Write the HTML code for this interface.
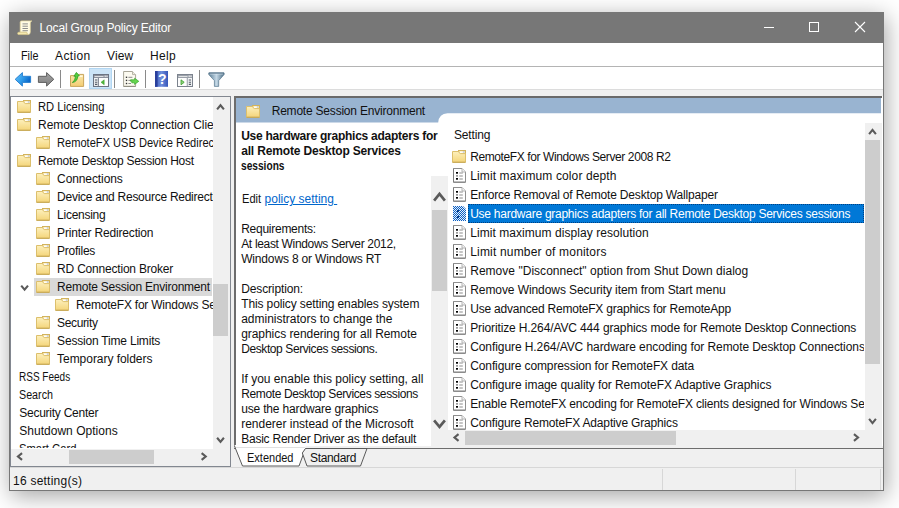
<!DOCTYPE html>
<html>
<head>
<meta charset="utf-8">
<title>Local Group Policy Editor</title>
<style>
html,body{margin:0;padding:0;}
body{width:899px;height:508px;overflow:hidden;background:#fff;position:relative;
 font-family:"Liberation Sans",sans-serif;font-size:12px;color:#111;}
.a{position:absolute;}
.t{position:absolute;white-space:nowrap;line-height:16px;height:16px;}
.b{font-weight:bold;}
#win{left:9px;top:12px;width:875px;height:479px;background:#fff;
 box-shadow:2px 5px 22px 0 rgba(0,0,0,.36);}
#title{left:9px;top:12px;width:875px;height:31px;background:#777;}
#frame{left:9px;top:43px;width:873px;height:447px;border:1px solid #777;border-top:none;}
.clip{position:absolute;overflow:hidden;}
.scr{position:absolute;background:#f0f0f0;}
.thumb{position:absolute;background:#cdcdcd;}
</style>
</head>
<body>
<div class="a" id="win"></div>
<div class="a" id="title"></div>

<svg class="a" style="left:17.4px;top:19.5px" width="16" height="16" viewBox="0 0 16 16"><path d="M3.2 2.2 Q3.2 0.9 4.6 0.9 H14.9 Q13.4 1.4 13.3 3 V12 Q13.3 14.6 11 14.6 L9 12.2 H3.2 Z" fill="#fffbe3" stroke="#e2d49a" stroke-width=".7"/><path d="M0.6 13.4 Q0.6 12.2 2 12.2 H10 Q9.4 14.6 11 14.6 H2 Q0.6 14.6 0.6 13.4Z" fill="#f6e9ae" stroke="#dccb88" stroke-width=".6"/><path d="M5.5 3.9 H10.9 M5.5 6.2 H10.9 M5.5 8.5 H10.9 M5.5 10.7 H10.9" stroke="#8c8c8c" stroke-width="1"/></svg>
<div class="t" style="left:39.5px;top:20px;letter-spacing:-0.15px;color:#fff;">Local Group Policy Editor</div>
<div class="a" style="left:764px;top:27px;width:10px;height:1px;background:#fff;"></div>
<div class="a" style="left:809px;top:22px;width:8px;height:8px;border:1px solid #fff;"></div>
<svg class="a" style="left:854px;top:21px" width="12" height="12" viewBox="0 0 12 12"><path d="M1 1 L11 11 M11 1 L1 11" stroke="#fff" stroke-width="1.1" fill="none"/></svg>
<div class="t" style="left:20.5px;top:48px;transform:scaleX(0.8995);transform-origin:0 0;">File</div>
<div class="t" style="left:55px;top:48px;letter-spacing:0.388px;">Action</div>
<div class="t" style="left:107px;top:48px;letter-spacing:0.134px;">View</div>
<div class="t" style="left:150px;top:48px;letter-spacing:0.337px;">Help</div>
<div class="a" style="left:10px;top:66px;width:873px;height:1px;background:#b4b4b4;"></div>
<div class="a" style="left:10px;top:89px;width:873px;height:7px;background:#f0f0f0;border-top:1px solid #dcdcdc;box-sizing:border-box;"></div>
<div class="a" style="left:89px;top:68px;width:23px;height:21px;background:#cce4f7;border:1px solid #b2d6f2;box-sizing:border-box;"></div>
<div class="a" style="left:60px;top:70px;width:1px;height:18px;background:#8a8a8a;"></div>
<div class="a" style="left:114px;top:70px;width:1px;height:18px;background:#8a8a8a;"></div>
<div class="a" style="left:145px;top:70px;width:1px;height:18px;background:#8a8a8a;"></div>
<div class="a" style="left:199px;top:70px;width:1px;height:18px;background:#8a8a8a;"></div>
<svg class="a" style="left:14px;top:71px" width="18" height="17" viewBox="0 0 18 17"><defs><linearGradient id="ba" x1="0" y1="0" x2="1" y2="0.5"><stop offset="0" stop-color="#6cc6fa"/><stop offset="0.55" stop-color="#2f9bea"/><stop offset="1" stop-color="#0a66c8"/></linearGradient></defs><path d="M1.2 8.3 L8.4 1.6 V5.3 H16.6 V11.4 H8.4 V15.1 Z" fill="url(#ba)" stroke="#2b82d2" stroke-width="1" stroke-linejoin="round"/></svg>
<svg class="a" style="left:37px;top:71px" width="18" height="17" viewBox="0 0 18 17"><defs><linearGradient id="fa" x1="0" y1="0" x2="0" y2="1"><stop offset="0" stop-color="#a2a2a2"/><stop offset="1" stop-color="#808080"/></linearGradient></defs><path d="M16.8 8.3 L9.6 1.6 V5.3 H1.4 V11.4 H9.6 V15.1 Z" fill="url(#fa)" stroke="#5e5e5e" stroke-width="1" stroke-linejoin="round"/></svg>
<svg class="a" style="left:69px;top:71px" width="16" height="17" viewBox="0 0 16 17"><defs><linearGradient id="uf" x1="0" y1="0" x2="0" y2="1"><stop offset="0" stop-color="#fbe8ad"/><stop offset="1" stop-color="#f3cc72"/></linearGradient></defs><path d="M1.5 4.6 H8.5 L9.5 3.4 H14.6 V15.4 H1.5 Z" fill="url(#uf)" stroke="#c9a55c"/><path d="M9.8 4.4 H13.6 V6 H9" fill="#fff8e0"/><path d="M3.4 11.6 Q6.2 9.6 6.6 5.2 L4.9 5.3 L7.4 1.4 L10.4 4.9 L8.8 5 Q8.6 10.6 3.4 11.6Z" fill="#52cf3c" stroke="#2f9c26" stroke-width="0.8" stroke-linejoin="round"/></svg>
<svg class="a" style="left:93px;top:74px" width="16" height="13" viewBox="0 0 16 13"><rect x="0.5" y="0.5" width="15" height="12" fill="#fdfdfd" stroke="#6c7382"/><rect x="1" y="1" width="14" height="3" fill="#8b909c"/><path d="M1.5 2.5 H10.5" stroke="#f4f4f4" stroke-width="0.8"/><rect x="11.6" y="1.6" width="1.2" height="1.2" fill="#fff"/><rect x="13.4" y="1.6" width="1.2" height="1.2" fill="#fff"/><rect x="1" y="4.5" width="4" height="7.5" fill="#e9ebee"/><path d="M5.4 4 V12.5" stroke="#6c7382" stroke-width="0.9"/><path d="M2 6 H4.3 M2 8.2 H4.3 M2 10.4 H4.3" stroke="#555c68" stroke-width="1.1"/><path d="M11.2 5.8 V10.8 L8 8.3 Z" fill="#4db83a" stroke="#3a9a2c" stroke-width="0.5"/></svg>
<svg class="a" style="left:123px;top:71px" width="17" height="16" viewBox="0 0 17 16"><path d="M0.6 0.5 H9.5 L12.6 3.6 V15.4 H0.6 Z" fill="#fdfbf1" stroke="#a9a698"/><path d="M9.5 0.5 V3.6 H12.6" fill="#efeee2" stroke="#b8b6a8"/><path d="M0.6 15.4 H12.6" stroke="#8f8c80"/><rect x="2.8" y="5.6" width="1.4" height="1.4" fill="#333"/><rect x="2.8" y="8.7" width="1.4" height="1.4" fill="#333"/><rect x="2.8" y="11.8" width="1.4" height="1.4" fill="#333"/><path d="M5.4 6.3 H9.4 M5.4 9.4 H8 M5.4 12.5 H8" stroke="#8c8c8c" stroke-width="1"/><path d="M7.6 8.8 H11.6 V7.2 L15.8 10.3 L11.6 13.4 V11.8 H8.8 V10.3 H7.6 Z" fill="#66d64e" stroke="#38a62c" stroke-width="0.7" stroke-linejoin="round"/></svg>
<svg class="a" style="left:155px;top:71px" width="13" height="16" viewBox="0 0 13 16"><defs><linearGradient id="hg" x1="0" y1="0" x2="1" y2="0"><stop offset="0" stop-color="#3f5cbc"/><stop offset="0.5" stop-color="#6f8edc"/><stop offset="1" stop-color="#3555b8"/></linearGradient></defs><rect x="0" y="0" width="13" height="15.8" fill="url(#hg)"/><rect x="0" y="0" width="2.6" height="15.8" fill="#2a3f9c"/><text x="7.4" y="12.8" font-family="Liberation Sans, sans-serif" font-size="14" font-weight="bold" fill="#fff" text-anchor="middle">?</text></svg>
<svg class="a" style="left:177px;top:74px" width="16" height="13" viewBox="0 0 16 13"><rect x="0.5" y="0.5" width="15" height="12" fill="#fdfdfd" stroke="#7c838e"/><rect x="1" y="1" width="14" height="3" fill="#9aa0a9"/><path d="M1.5 2.5 H10.5" stroke="#f4f4f4" stroke-width="0.8"/><rect x="11.6" y="1.6" width="1.2" height="1.2" fill="#fff"/><rect x="13.4" y="1.6" width="1.2" height="1.2" fill="#fff"/><path d="M10.3 4 V12.5" stroke="#7c838e" stroke-width="0.9"/><rect x="10.8" y="4.5" width="4.2" height="7.5" fill="#eef0f2"/><path d="M11.8 6 H14 M11.8 8.2 H14 M11.8 10.4 H14" stroke="#555c68" stroke-width="1.1"/><path d="M4 5.8 V10.8 L7.2 8.3 Z" fill="#8fd67c" stroke="#3a9a2c" stroke-width="0.8"/></svg>
<svg class="a" style="left:208px;top:72px" width="17" height="15" viewBox="0 0 17 15"><defs><linearGradient id="fl" x1="0" y1="0" x2="1" y2="0"><stop offset="0" stop-color="#5c7e96"/><stop offset="0.5" stop-color="#c4d8e6"/><stop offset="1" stop-color="#4a6c84"/></linearGradient></defs><path d="M0.8 1 H16.1 V2.6 L10.7 8.6 V14.4 H6.4 V8.6 L0.8 2.6 Z" fill="url(#fl)" stroke="#55758d" stroke-width="0.7"/><path d="M1.6 1.9 H15.3" stroke="#dfeaf2" stroke-width="0.9"/><path d="M0.8 1 H16.1" stroke="#4b6a82" stroke-width="1"/></svg>
<div class="a" style="left:10px;top:96px;width:873px;height:371px;background:#f0f0f0;"></div>
<div class="a" style="left:10px;top:467px;width:873px;height:23px;background:#f0f0f0;border-top:1px solid #d7d7d7;"></div>
<div class="a" style="left:10px;top:96px;width:221px;height:371px;background:#fff;border:1px solid #828790;box-sizing:border-box;"></div>
<div class="clip" style="left:11px;top:97px;width:202px;height:351px;">
<svg class="a" style="left:6px;top:3px" width="14" height="13" viewBox="0 0 14 13"><defs><linearGradient id="fg1" x1="0" y1="0" x2="0" y2="1"><stop offset="0" stop-color="#fdf0bd"/><stop offset="1" stop-color="#f4d57a"/></linearGradient></defs><rect x="6.5" y="0.5" width="7" height="4" fill="#f3d98c" stroke="#d2b35c"/><rect x="7.6" y="1.3" width="4.9" height="2" fill="#fffdf4"/><rect x="10.8" y="1.3" width="1.7" height="1.4" fill="#b9c4cf"/><path d="M0.5 1.5 H6 Q7 1.5 7.3 2.6 Q7.6 3.6 8.6 3.6 H13.5 V12.2 H0.5 Z" fill="url(#fg1)" stroke="#dcbf6c" stroke-width="1"/><path d="M0.5 12.3 H13.5" stroke="#c5a550" stroke-width="1"/></svg>
<div class="t tr" style="left:27.1px;top:2px;transform:scaleX(0.9317);transform-origin:0 0;">RD Licensing</div>
<svg class="a" style="left:6px;top:21px" width="14" height="13" viewBox="0 0 14 13"><defs><linearGradient id="fg2" x1="0" y1="0" x2="0" y2="1"><stop offset="0" stop-color="#fdf0bd"/><stop offset="1" stop-color="#f4d57a"/></linearGradient></defs><rect x="6.5" y="0.5" width="7" height="4" fill="#f3d98c" stroke="#d2b35c"/><rect x="7.6" y="1.3" width="4.9" height="2" fill="#fffdf4"/><rect x="10.8" y="1.3" width="1.7" height="1.4" fill="#b9c4cf"/><path d="M0.5 1.5 H6 Q7 1.5 7.3 2.6 Q7.6 3.6 8.6 3.6 H13.5 V12.2 H0.5 Z" fill="url(#fg2)" stroke="#dcbf6c" stroke-width="1"/><path d="M0.5 12.3 H13.5" stroke="#c5a550" stroke-width="1"/></svg>
<div class="t tr" style="left:27.1px;top:20px;letter-spacing:-0.061px;">Remote Desktop Connection Client</div>
<svg class="a" style="left:25px;top:39px" width="14" height="13" viewBox="0 0 14 13"><defs><linearGradient id="fg3" x1="0" y1="0" x2="0" y2="1"><stop offset="0" stop-color="#fdf0bd"/><stop offset="1" stop-color="#f4d57a"/></linearGradient></defs><rect x="6.5" y="0.5" width="7" height="4" fill="#f3d98c" stroke="#d2b35c"/><rect x="7.6" y="1.3" width="4.9" height="2" fill="#fffdf4"/><rect x="10.8" y="1.3" width="1.7" height="1.4" fill="#b9c4cf"/><path d="M0.5 1.5 H6 Q7 1.5 7.3 2.6 Q7.6 3.6 8.6 3.6 H13.5 V12.2 H0.5 Z" fill="url(#fg3)" stroke="#dcbf6c" stroke-width="1"/><path d="M0.5 12.3 H13.5" stroke="#c5a550" stroke-width="1"/></svg>
<div class="t tr" style="left:46.1px;top:38px;transform:scaleX(0.9238);transform-origin:0 0;">RemoteFX USB Device Redirection</div>
<svg class="a" style="left:6px;top:57px" width="14" height="13" viewBox="0 0 14 13"><defs><linearGradient id="fg4" x1="0" y1="0" x2="0" y2="1"><stop offset="0" stop-color="#fdf0bd"/><stop offset="1" stop-color="#f4d57a"/></linearGradient></defs><rect x="6.5" y="0.5" width="7" height="4" fill="#f3d98c" stroke="#d2b35c"/><rect x="7.6" y="1.3" width="4.9" height="2" fill="#fffdf4"/><rect x="10.8" y="1.3" width="1.7" height="1.4" fill="#b9c4cf"/><path d="M0.5 1.5 H6 Q7 1.5 7.3 2.6 Q7.6 3.6 8.6 3.6 H13.5 V12.2 H0.5 Z" fill="url(#fg4)" stroke="#dcbf6c" stroke-width="1"/><path d="M0.5 12.3 H13.5" stroke="#c5a550" stroke-width="1"/></svg>
<div class="t tr" style="left:27.1px;top:56px;letter-spacing:-0.289px;">Remote Desktop Session Host</div>
<svg class="a" style="left:25px;top:75px" width="14" height="13" viewBox="0 0 14 13"><defs><linearGradient id="fg5" x1="0" y1="0" x2="0" y2="1"><stop offset="0" stop-color="#fdf0bd"/><stop offset="1" stop-color="#f4d57a"/></linearGradient></defs><rect x="6.5" y="0.5" width="7" height="4" fill="#f3d98c" stroke="#d2b35c"/><rect x="7.6" y="1.3" width="4.9" height="2" fill="#fffdf4"/><rect x="10.8" y="1.3" width="1.7" height="1.4" fill="#b9c4cf"/><path d="M0.5 1.5 H6 Q7 1.5 7.3 2.6 Q7.6 3.6 8.6 3.6 H13.5 V12.2 H0.5 Z" fill="url(#fg5)" stroke="#dcbf6c" stroke-width="1"/><path d="M0.5 12.3 H13.5" stroke="#c5a550" stroke-width="1"/></svg>
<div class="t tr" style="left:46.1px;top:74px;letter-spacing:-0.102px;">Connections</div>
<svg class="a" style="left:25px;top:93px" width="14" height="13" viewBox="0 0 14 13"><defs><linearGradient id="fg6" x1="0" y1="0" x2="0" y2="1"><stop offset="0" stop-color="#fdf0bd"/><stop offset="1" stop-color="#f4d57a"/></linearGradient></defs><rect x="6.5" y="0.5" width="7" height="4" fill="#f3d98c" stroke="#d2b35c"/><rect x="7.6" y="1.3" width="4.9" height="2" fill="#fffdf4"/><rect x="10.8" y="1.3" width="1.7" height="1.4" fill="#b9c4cf"/><path d="M0.5 1.5 H6 Q7 1.5 7.3 2.6 Q7.6 3.6 8.6 3.6 H13.5 V12.2 H0.5 Z" fill="url(#fg6)" stroke="#dcbf6c" stroke-width="1"/><path d="M0.5 12.3 H13.5" stroke="#c5a550" stroke-width="1"/></svg>
<div class="t tr" style="left:46.1px;top:92px;letter-spacing:-0.263px;">Device and Resource Redirection</div>
<svg class="a" style="left:25px;top:111px" width="14" height="13" viewBox="0 0 14 13"><defs><linearGradient id="fg7" x1="0" y1="0" x2="0" y2="1"><stop offset="0" stop-color="#fdf0bd"/><stop offset="1" stop-color="#f4d57a"/></linearGradient></defs><rect x="6.5" y="0.5" width="7" height="4" fill="#f3d98c" stroke="#d2b35c"/><rect x="7.6" y="1.3" width="4.9" height="2" fill="#fffdf4"/><rect x="10.8" y="1.3" width="1.7" height="1.4" fill="#b9c4cf"/><path d="M0.5 1.5 H6 Q7 1.5 7.3 2.6 Q7.6 3.6 8.6 3.6 H13.5 V12.2 H0.5 Z" fill="url(#fg7)" stroke="#dcbf6c" stroke-width="1"/><path d="M0.5 12.3 H13.5" stroke="#c5a550" stroke-width="1"/></svg>
<div class="t tr" style="left:46.1px;top:110px;letter-spacing:-0.263px;">Licensing</div>
<svg class="a" style="left:25px;top:129px" width="14" height="13" viewBox="0 0 14 13"><defs><linearGradient id="fg8" x1="0" y1="0" x2="0" y2="1"><stop offset="0" stop-color="#fdf0bd"/><stop offset="1" stop-color="#f4d57a"/></linearGradient></defs><rect x="6.5" y="0.5" width="7" height="4" fill="#f3d98c" stroke="#d2b35c"/><rect x="7.6" y="1.3" width="4.9" height="2" fill="#fffdf4"/><rect x="10.8" y="1.3" width="1.7" height="1.4" fill="#b9c4cf"/><path d="M0.5 1.5 H6 Q7 1.5 7.3 2.6 Q7.6 3.6 8.6 3.6 H13.5 V12.2 H0.5 Z" fill="url(#fg8)" stroke="#dcbf6c" stroke-width="1"/><path d="M0.5 12.3 H13.5" stroke="#c5a550" stroke-width="1"/></svg>
<div class="t tr" style="left:46.1px;top:128px;letter-spacing:-0.165px;">Printer Redirection</div>
<svg class="a" style="left:25px;top:147px" width="14" height="13" viewBox="0 0 14 13"><defs><linearGradient id="fg9" x1="0" y1="0" x2="0" y2="1"><stop offset="0" stop-color="#fdf0bd"/><stop offset="1" stop-color="#f4d57a"/></linearGradient></defs><rect x="6.5" y="0.5" width="7" height="4" fill="#f3d98c" stroke="#d2b35c"/><rect x="7.6" y="1.3" width="4.9" height="2" fill="#fffdf4"/><rect x="10.8" y="1.3" width="1.7" height="1.4" fill="#b9c4cf"/><path d="M0.5 1.5 H6 Q7 1.5 7.3 2.6 Q7.6 3.6 8.6 3.6 H13.5 V12.2 H0.5 Z" fill="url(#fg9)" stroke="#dcbf6c" stroke-width="1"/><path d="M0.5 12.3 H13.5" stroke="#c5a550" stroke-width="1"/></svg>
<div class="t tr" style="left:46.1px;top:146px;letter-spacing:-0.259px;">Profiles</div>
<svg class="a" style="left:25px;top:165px" width="14" height="13" viewBox="0 0 14 13"><defs><linearGradient id="fg10" x1="0" y1="0" x2="0" y2="1"><stop offset="0" stop-color="#fdf0bd"/><stop offset="1" stop-color="#f4d57a"/></linearGradient></defs><rect x="6.5" y="0.5" width="7" height="4" fill="#f3d98c" stroke="#d2b35c"/><rect x="7.6" y="1.3" width="4.9" height="2" fill="#fffdf4"/><rect x="10.8" y="1.3" width="1.7" height="1.4" fill="#b9c4cf"/><path d="M0.5 1.5 H6 Q7 1.5 7.3 2.6 Q7.6 3.6 8.6 3.6 H13.5 V12.2 H0.5 Z" fill="url(#fg10)" stroke="#dcbf6c" stroke-width="1"/><path d="M0.5 12.3 H13.5" stroke="#c5a550" stroke-width="1"/></svg>
<div class="t tr" style="left:46.1px;top:164px;letter-spacing:-0.203px;">RD Connection Broker</div>
<div class="a" style="left:23px;top:181px;width:178px;height:17.5px;background:#d9d9d9;"></div>
<svg class="a" style="left:25px;top:183px" width="14" height="13" viewBox="0 0 14 13"><defs><linearGradient id="fg11" x1="0" y1="0" x2="0" y2="1"><stop offset="0" stop-color="#fdf0bd"/><stop offset="1" stop-color="#f4d57a"/></linearGradient></defs><rect x="6.5" y="0.5" width="7" height="4" fill="#f3d98c" stroke="#d2b35c"/><rect x="7.6" y="1.3" width="4.9" height="2" fill="#fffdf4"/><rect x="10.8" y="1.3" width="1.7" height="1.4" fill="#b9c4cf"/><path d="M0.5 1.5 H6 Q7 1.5 7.3 2.6 Q7.6 3.6 8.6 3.6 H13.5 V12.2 H0.5 Z" fill="url(#fg11)" stroke="#dcbf6c" stroke-width="1"/><path d="M0.5 12.3 H13.5" stroke="#c5a550" stroke-width="1"/></svg>
<div class="t tr" style="left:46.1px;top:182px;letter-spacing:-0.23px;">Remote Session Environment</div>
<svg class="a" style="left:44px;top:201px" width="14" height="13" viewBox="0 0 14 13"><defs><linearGradient id="fg12" x1="0" y1="0" x2="0" y2="1"><stop offset="0" stop-color="#fdf0bd"/><stop offset="1" stop-color="#f4d57a"/></linearGradient></defs><rect x="6.5" y="0.5" width="7" height="4" fill="#f3d98c" stroke="#d2b35c"/><rect x="7.6" y="1.3" width="4.9" height="2" fill="#fffdf4"/><rect x="10.8" y="1.3" width="1.7" height="1.4" fill="#b9c4cf"/><path d="M0.5 1.5 H6 Q7 1.5 7.3 2.6 Q7.6 3.6 8.6 3.6 H13.5 V12.2 H0.5 Z" fill="url(#fg12)" stroke="#dcbf6c" stroke-width="1"/><path d="M0.5 12.3 H13.5" stroke="#c5a550" stroke-width="1"/></svg>
<div class="t tr" style="left:65.1px;top:200px;letter-spacing:-0.223px;">RemoteFX for Windows Server 2008 R2</div>
<svg class="a" style="left:25px;top:219px" width="14" height="13" viewBox="0 0 14 13"><defs><linearGradient id="fg13" x1="0" y1="0" x2="0" y2="1"><stop offset="0" stop-color="#fdf0bd"/><stop offset="1" stop-color="#f4d57a"/></linearGradient></defs><rect x="6.5" y="0.5" width="7" height="4" fill="#f3d98c" stroke="#d2b35c"/><rect x="7.6" y="1.3" width="4.9" height="2" fill="#fffdf4"/><rect x="10.8" y="1.3" width="1.7" height="1.4" fill="#b9c4cf"/><path d="M0.5 1.5 H6 Q7 1.5 7.3 2.6 Q7.6 3.6 8.6 3.6 H13.5 V12.2 H0.5 Z" fill="url(#fg13)" stroke="#dcbf6c" stroke-width="1"/><path d="M0.5 12.3 H13.5" stroke="#c5a550" stroke-width="1"/></svg>
<div class="t tr" style="left:46.1px;top:218px;letter-spacing:-0.366px;">Security</div>
<svg class="a" style="left:25px;top:237px" width="14" height="13" viewBox="0 0 14 13"><defs><linearGradient id="fg14" x1="0" y1="0" x2="0" y2="1"><stop offset="0" stop-color="#fdf0bd"/><stop offset="1" stop-color="#f4d57a"/></linearGradient></defs><rect x="6.5" y="0.5" width="7" height="4" fill="#f3d98c" stroke="#d2b35c"/><rect x="7.6" y="1.3" width="4.9" height="2" fill="#fffdf4"/><rect x="10.8" y="1.3" width="1.7" height="1.4" fill="#b9c4cf"/><path d="M0.5 1.5 H6 Q7 1.5 7.3 2.6 Q7.6 3.6 8.6 3.6 H13.5 V12.2 H0.5 Z" fill="url(#fg14)" stroke="#dcbf6c" stroke-width="1"/><path d="M0.5 12.3 H13.5" stroke="#c5a550" stroke-width="1"/></svg>
<div class="t tr" style="left:46.1px;top:236px;letter-spacing:-0.195px;">Session Time Limits</div>
<svg class="a" style="left:25px;top:255px" width="14" height="13" viewBox="0 0 14 13"><defs><linearGradient id="fg15" x1="0" y1="0" x2="0" y2="1"><stop offset="0" stop-color="#fdf0bd"/><stop offset="1" stop-color="#f4d57a"/></linearGradient></defs><rect x="6.5" y="0.5" width="7" height="4" fill="#f3d98c" stroke="#d2b35c"/><rect x="7.6" y="1.3" width="4.9" height="2" fill="#fffdf4"/><rect x="10.8" y="1.3" width="1.7" height="1.4" fill="#b9c4cf"/><path d="M0.5 1.5 H6 Q7 1.5 7.3 2.6 Q7.6 3.6 8.6 3.6 H13.5 V12.2 H0.5 Z" fill="url(#fg15)" stroke="#dcbf6c" stroke-width="1"/><path d="M0.5 12.3 H13.5" stroke="#c5a550" stroke-width="1"/></svg>
<div class="t tr" style="left:46.1px;top:254px;letter-spacing:-0.047px;">Temporary folders</div>
<div class="t tr" style="left:8.2px;top:272px;transform:scaleX(0.8344);transform-origin:0 0;">RSS Feeds</div>
<div class="t tr" style="left:8.2px;top:290px;transform:scaleX(0.894);transform-origin:0 0;">Search</div>
<div class="t tr" style="left:8.2px;top:308px;letter-spacing:-0.243px;">Security Center</div>
<div class="t tr" style="left:8.2px;top:326px;letter-spacing:0.029px;">Shutdown Options</div>
<div class="t tr" style="left:8.2px;top:344px;transform:scaleX(0.9371);transform-origin:0 0;">Smart Card</div>
</div>
<div class="scr" style="left:213px;top:97px;width:17px;height:352px;"></div>
<div class="thumb" style="left:213px;top:284px;width:15px;height:52px;"></div>
<svg class="a" style="left:0;top:0" width="899" height="508"><path d="M217.1 109.35 L220.5 105.25 L223.9 109.35" fill="none" stroke="#5a5a5a" stroke-width="2.1"/></svg>
<svg class="a" style="left:0;top:0" width="899" height="508"><path d="M217.1 437.75 L220.5 441.85 L223.9 437.75" fill="none" stroke="#5a5a5a" stroke-width="2.1"/></svg>
<svg class="a" style="left:0;top:0" width="899" height="508"><path d="M21.200000000000003 285.55 L24.6 289.65000000000003 L28.0 285.55" fill="none" stroke="#5a5a5a" stroke-width="2.1"/></svg>
<div class="scr" style="left:11px;top:448.5px;width:219px;height:17.5px;"></div>
<div class="thumb" style="left:69px;top:450px;width:85px;height:14px;"></div>
<svg class="a" style="left:0;top:0" width="899" height="508"><path d="M22.05 453.1 L17.95 456.5 L22.05 459.9" fill="none" stroke="#5a5a5a" stroke-width="2.1"/></svg>
<svg class="a" style="left:0;top:0" width="899" height="508"><path d="M201.64999999999998 453.1 L205.75 456.5 L201.64999999999998 459.9" fill="none" stroke="#5a5a5a" stroke-width="2.1"/></svg>
<div class="a" style="left:234px;top:96px;width:649px;height:350px;background:#fff;"></div>
<div class="a" style="left:234px;top:96px;width:648px;height:1.7px;background:#6a6a6a;"></div>
<div class="a" style="left:234px;top:96px;width:2px;height:350px;background:#6d6d6d;"></div>
<div class="a" style="left:234px;top:448px;width:649px;height:1px;background:#6d6d6d;"></div>
<svg class="a" style="left:236px;top:98px" width="645" height="26" viewBox="0 0 645 26"><path d="M0 0 H645 V15.3 H211.5 Q203 15.6 202.2 24.5 H0 Z" fill="#99b4d1"/></svg>
<svg class="a" style="left:246px;top:105px" width="14" height="13" viewBox="0 0 14 13"><defs><linearGradient id="fg16" x1="0" y1="0" x2="0" y2="1"><stop offset="0" stop-color="#fdf0bd"/><stop offset="1" stop-color="#f4d57a"/></linearGradient></defs><rect x="6.5" y="0.5" width="7" height="4" fill="#f3d98c" stroke="#d2b35c"/><rect x="7.6" y="1.3" width="4.9" height="2" fill="#fffdf4"/><rect x="10.8" y="1.3" width="1.7" height="1.4" fill="#b9c4cf"/><path d="M0.5 1.5 H6 Q7 1.5 7.3 2.6 Q7.6 3.6 8.6 3.6 H13.5 V12.2 H0.5 Z" fill="url(#fg16)" stroke="#dcbf6c" stroke-width="1"/><path d="M0.5 12.3 H13.5" stroke="#c5a550" stroke-width="1"/></svg>
<div class="t hd" style="left:271.7px;top:103px;letter-spacing:-0.209px;">Remote Session Environment</div>
<div class="clip" style="left:236px;top:123px;width:212px;height:323px;">
<div class="t b" style="left:5.199999999999989px;top:5px;letter-spacing:-0.25px;">Use hardware graphics adapters for</div>
<div class="t b" style="left:5.199999999999989px;top:20px;letter-spacing:-0.165px;">all Remote Desktop Services</div>
<div class="t b" style="left:5.199999999999989px;top:35px;transform:scaleX(0.8467);transform-origin:0 0;">sessions</div>
<div class="t" style="left:5.5px;top:68px;transform:scaleX(0.9233);transform-origin:0 0;">Edit</div>
<div class="t" style="left:28.600000000000023px;top:68px;color:#0066cc;text-decoration:underline;letter-spacing:-0.006px">policy setting&nbsp;</div>
<div class="t" style="left:5.199999999999989px;top:98px;letter-spacing:-0.262px;">Requirements:</div>
<div class="t" style="left:5.199999999999989px;top:113px;letter-spacing:-0.328px;">At least Windows Server 2012,</div>
<div class="t" style="left:5.199999999999989px;top:128px;letter-spacing:-0.165px;">Windows 8 or Windows RT</div>
<div class="t" style="left:5.199999999999989px;top:158px;letter-spacing:-0.133px;">Description:</div>
<div class="t" style="left:5.199999999999989px;top:173px;letter-spacing:-0.118px;">This policy setting enables system</div>
<div class="t" style="left:5.199999999999989px;top:188px;letter-spacing:-0.008px;">administrators to change the</div>
<div class="t" style="left:5.199999999999989px;top:203px;letter-spacing:-0.054px;">graphics rendering for all Remote</div>
<div class="t" style="left:5.199999999999989px;top:218px;letter-spacing:-0.405px;">Desktop Services sessions.</div>
<div class="t" style="left:5.199999999999989px;top:248px;">If you enable this policy setting, all</div>
<div class="t" style="left:5.199999999999989px;top:263px;letter-spacing:-0.376px;">Remote Desktop Services sessions</div>
<div class="t" style="left:5.199999999999989px;top:278px;letter-spacing:-0.168px;">use the hardware graphics</div>
<div class="t" style="left:5.199999999999989px;top:293px;letter-spacing:-0.011px;">renderer instead of the Microsoft</div>
<div class="t" style="left:5.199999999999989px;top:308px;letter-spacing:-0.229px;">Basic Render Driver as the default</div>
</div>
<div class="scr" style="left:431px;top:176px;width:17px;height:270px;"></div>
<div class="thumb" style="left:432px;top:210px;width:15px;height:81px;"></div>
<svg class="a" style="left:0;top:0" width="899" height="508"><path d="M434.1 200.60000000000002 L439.5 194.0 L444.9 200.60000000000002" fill="none" stroke="#5a5a5a" stroke-width="2.7"/></svg>
<svg class="a" style="left:0;top:0" width="899" height="508"><path d="M434.1 420.3 L439.5 426.90000000000003 L444.9 420.3" fill="none" stroke="#5a5a5a" stroke-width="2.7"/></svg>
<div class="t" style="left:454px;top:127px;letter-spacing:-0.16px;">Setting</div>
<div class="clip" style="left:449px;top:147px;width:414.6px;height:283px;">
<svg class="a" style="left:3px;top:3px" width="14" height="13" viewBox="0 0 14 13"><defs><linearGradient id="fg17" x1="0" y1="0" x2="0" y2="1"><stop offset="0" stop-color="#fdf0bd"/><stop offset="1" stop-color="#f4d57a"/></linearGradient></defs><rect x="6.5" y="0.5" width="7" height="4" fill="#f3d98c" stroke="#d2b35c"/><rect x="7.6" y="1.3" width="4.9" height="2" fill="#fffdf4"/><rect x="10.8" y="1.3" width="1.7" height="1.4" fill="#b9c4cf"/><path d="M0.5 1.5 H6 Q7 1.5 7.3 2.6 Q7.6 3.6 8.6 3.6 H13.5 V12.2 H0.5 Z" fill="url(#fg17)" stroke="#dcbf6c" stroke-width="1"/><path d="M0.5 12.3 H13.5" stroke="#c5a550" stroke-width="1"/></svg>
<div class="t li" style="left:21.19999999999999px;top:2px;letter-spacing:-0.394px;">RemoteFX for Windows Server 2008 R2</div>
<svg class="a" style="left:4px;top:21px" width="14" height="15" viewBox="0 0 14 15"><path d="M0.5 0.5 H9 L12.5 4 V14.2 H0.5 Z" fill="#fff" stroke="#8e8e8e"/><path d="M9 0.5 V4 H12.5" fill="#f4f4f4" stroke="#b4b4b4"/><path d="M0.5 0.5 V14.2 H12.5" fill="none" stroke="#7c7c7c"/><rect x="3" y="4" width="2" height="1.7" fill="#000"/><rect x="3" y="7" width="2" height="1.7" fill="#9a9a9a"/><rect x="3" y="10" width="2" height="1.7" fill="#000"/><path d="M6.3 5 H9.8 M6.3 8 H9.8 M6.3 11 H9.8" stroke="#8a8a8a" stroke-width="1"/></svg>
<div class="t li" style="left:21.19999999999999px;top:21px;letter-spacing:0.121px;">Limit maximum color depth</div>
<svg class="a" style="left:4px;top:40px" width="14" height="15" viewBox="0 0 14 15"><path d="M0.5 0.5 H9 L12.5 4 V14.2 H0.5 Z" fill="#fff" stroke="#8e8e8e"/><path d="M9 0.5 V4 H12.5" fill="#f4f4f4" stroke="#b4b4b4"/><path d="M0.5 0.5 V14.2 H12.5" fill="none" stroke="#7c7c7c"/><rect x="3" y="4" width="2" height="1.7" fill="#000"/><rect x="3" y="7" width="2" height="1.7" fill="#9a9a9a"/><rect x="3" y="10" width="2" height="1.7" fill="#000"/><path d="M6.3 5 H9.8 M6.3 8 H9.8 M6.3 11 H9.8" stroke="#8a8a8a" stroke-width="1"/></svg>
<div class="t li" style="left:21.19999999999999px;top:40px;letter-spacing:-0.171px;">Enforce Removal of Remote Desktop Wallpaper</div>
<div class="a" style="left:19px;top:57px;width:395.5px;height:18.5px;background:#0078d7;outline:1px dotted rgba(0,20,60,.55);outline-offset:-1px;"></div>
<svg class="a" style="left:4px;top:59px" width="14" height="15" viewBox="0 0 14 15"><defs><pattern id="dz" width="2" height="2" patternUnits="userSpaceOnUse"><rect width="2" height="2" fill="#e4eefa"/><rect width="1" height="1" fill="#0a5fc4"/><rect x="1" y="1" width="1" height="1" fill="#0a5fc4"/></pattern></defs><path d="M0 0 H10 L13 3 V15 H0 Z" fill="url(#dz)"/><path d="M4 4 H6 V6 H4Z M4 10 H6 V12 H4Z" fill="#003a8a"/></svg>
<div class="t li" style="left:21.19999999999999px;top:59px;letter-spacing:-0.257px;color:#fff;">Use hardware graphics adapters for all Remote Desktop Services sessions</div>
<svg class="a" style="left:4px;top:78px" width="14" height="15" viewBox="0 0 14 15"><path d="M0.5 0.5 H9 L12.5 4 V14.2 H0.5 Z" fill="#fff" stroke="#8e8e8e"/><path d="M9 0.5 V4 H12.5" fill="#f4f4f4" stroke="#b4b4b4"/><path d="M0.5 0.5 V14.2 H12.5" fill="none" stroke="#7c7c7c"/><rect x="3" y="4" width="2" height="1.7" fill="#000"/><rect x="3" y="7" width="2" height="1.7" fill="#9a9a9a"/><rect x="3" y="10" width="2" height="1.7" fill="#000"/><path d="M6.3 5 H9.8 M6.3 8 H9.8 M6.3 11 H9.8" stroke="#8a8a8a" stroke-width="1"/></svg>
<div class="t li" style="left:21.19999999999999px;top:78px;letter-spacing:0.057px;">Limit maximum display resolution</div>
<svg class="a" style="left:4px;top:97px" width="14" height="15" viewBox="0 0 14 15"><path d="M0.5 0.5 H9 L12.5 4 V14.2 H0.5 Z" fill="#fff" stroke="#8e8e8e"/><path d="M9 0.5 V4 H12.5" fill="#f4f4f4" stroke="#b4b4b4"/><path d="M0.5 0.5 V14.2 H12.5" fill="none" stroke="#7c7c7c"/><rect x="3" y="4" width="2" height="1.7" fill="#000"/><rect x="3" y="7" width="2" height="1.7" fill="#9a9a9a"/><rect x="3" y="10" width="2" height="1.7" fill="#000"/><path d="M6.3 5 H9.8 M6.3 8 H9.8 M6.3 11 H9.8" stroke="#8a8a8a" stroke-width="1"/></svg>
<div class="t li" style="left:21.19999999999999px;top:97px;letter-spacing:0.181px;">Limit number of monitors</div>
<svg class="a" style="left:4px;top:116px" width="14" height="15" viewBox="0 0 14 15"><path d="M0.5 0.5 H9 L12.5 4 V14.2 H0.5 Z" fill="#fff" stroke="#8e8e8e"/><path d="M9 0.5 V4 H12.5" fill="#f4f4f4" stroke="#b4b4b4"/><path d="M0.5 0.5 V14.2 H12.5" fill="none" stroke="#7c7c7c"/><rect x="3" y="4" width="2" height="1.7" fill="#000"/><rect x="3" y="7" width="2" height="1.7" fill="#9a9a9a"/><rect x="3" y="10" width="2" height="1.7" fill="#000"/><path d="M6.3 5 H9.8 M6.3 8 H9.8 M6.3 11 H9.8" stroke="#8a8a8a" stroke-width="1"/></svg>
<div class="t li" style="left:21.19999999999999px;top:116px;letter-spacing:0.029px;">Remove "Disconnect" option from Shut Down dialog</div>
<svg class="a" style="left:4px;top:135px" width="14" height="15" viewBox="0 0 14 15"><path d="M0.5 0.5 H9 L12.5 4 V14.2 H0.5 Z" fill="#fff" stroke="#8e8e8e"/><path d="M9 0.5 V4 H12.5" fill="#f4f4f4" stroke="#b4b4b4"/><path d="M0.5 0.5 V14.2 H12.5" fill="none" stroke="#7c7c7c"/><rect x="3" y="4" width="2" height="1.7" fill="#000"/><rect x="3" y="7" width="2" height="1.7" fill="#9a9a9a"/><rect x="3" y="10" width="2" height="1.7" fill="#000"/><path d="M6.3 5 H9.8 M6.3 8 H9.8 M6.3 11 H9.8" stroke="#8a8a8a" stroke-width="1"/></svg>
<div class="t li" style="left:21.19999999999999px;top:135px;letter-spacing:-0.076px;">Remove Windows Security item from Start menu</div>
<svg class="a" style="left:4px;top:154px" width="14" height="15" viewBox="0 0 14 15"><path d="M0.5 0.5 H9 L12.5 4 V14.2 H0.5 Z" fill="#fff" stroke="#8e8e8e"/><path d="M9 0.5 V4 H12.5" fill="#f4f4f4" stroke="#b4b4b4"/><path d="M0.5 0.5 V14.2 H12.5" fill="none" stroke="#7c7c7c"/><rect x="3" y="4" width="2" height="1.7" fill="#000"/><rect x="3" y="7" width="2" height="1.7" fill="#9a9a9a"/><rect x="3" y="10" width="2" height="1.7" fill="#000"/><path d="M6.3 5 H9.8 M6.3 8 H9.8 M6.3 11 H9.8" stroke="#8a8a8a" stroke-width="1"/></svg>
<div class="t li" style="left:21.19999999999999px;top:154px;letter-spacing:-0.213px;">Use advanced RemoteFX graphics for RemoteApp</div>
<svg class="a" style="left:4px;top:173px" width="14" height="15" viewBox="0 0 14 15"><path d="M0.5 0.5 H9 L12.5 4 V14.2 H0.5 Z" fill="#fff" stroke="#8e8e8e"/><path d="M9 0.5 V4 H12.5" fill="#f4f4f4" stroke="#b4b4b4"/><path d="M0.5 0.5 V14.2 H12.5" fill="none" stroke="#7c7c7c"/><rect x="3" y="4" width="2" height="1.7" fill="#000"/><rect x="3" y="7" width="2" height="1.7" fill="#9a9a9a"/><rect x="3" y="10" width="2" height="1.7" fill="#000"/><path d="M6.3 5 H9.8 M6.3 8 H9.8 M6.3 11 H9.8" stroke="#8a8a8a" stroke-width="1"/></svg>
<div class="t li" style="left:21.19999999999999px;top:173px;letter-spacing:-0.126px;">Prioritize H.264/AVC 444 graphics mode for Remote Desktop Connections</div>
<svg class="a" style="left:4px;top:192px" width="14" height="15" viewBox="0 0 14 15"><path d="M0.5 0.5 H9 L12.5 4 V14.2 H0.5 Z" fill="#fff" stroke="#8e8e8e"/><path d="M9 0.5 V4 H12.5" fill="#f4f4f4" stroke="#b4b4b4"/><path d="M0.5 0.5 V14.2 H12.5" fill="none" stroke="#7c7c7c"/><rect x="3" y="4" width="2" height="1.7" fill="#000"/><rect x="3" y="7" width="2" height="1.7" fill="#9a9a9a"/><rect x="3" y="10" width="2" height="1.7" fill="#000"/><path d="M6.3 5 H9.8 M6.3 8 H9.8 M6.3 11 H9.8" stroke="#8a8a8a" stroke-width="1"/></svg>
<div class="t li" style="left:21.19999999999999px;top:192px;letter-spacing:-0.079px;">Configure H.264/AVC hardware encoding for Remote Desktop Connections</div>
<svg class="a" style="left:4px;top:211px" width="14" height="15" viewBox="0 0 14 15"><path d="M0.5 0.5 H9 L12.5 4 V14.2 H0.5 Z" fill="#fff" stroke="#8e8e8e"/><path d="M9 0.5 V4 H12.5" fill="#f4f4f4" stroke="#b4b4b4"/><path d="M0.5 0.5 V14.2 H12.5" fill="none" stroke="#7c7c7c"/><rect x="3" y="4" width="2" height="1.7" fill="#000"/><rect x="3" y="7" width="2" height="1.7" fill="#9a9a9a"/><rect x="3" y="10" width="2" height="1.7" fill="#000"/><path d="M6.3 5 H9.8 M6.3 8 H9.8 M6.3 11 H9.8" stroke="#8a8a8a" stroke-width="1"/></svg>
<div class="t li" style="left:21.19999999999999px;top:211px;letter-spacing:-0.106px;">Configure compression for RemoteFX data</div>
<svg class="a" style="left:4px;top:230px" width="14" height="15" viewBox="0 0 14 15"><path d="M0.5 0.5 H9 L12.5 4 V14.2 H0.5 Z" fill="#fff" stroke="#8e8e8e"/><path d="M9 0.5 V4 H12.5" fill="#f4f4f4" stroke="#b4b4b4"/><path d="M0.5 0.5 V14.2 H12.5" fill="none" stroke="#7c7c7c"/><rect x="3" y="4" width="2" height="1.7" fill="#000"/><rect x="3" y="7" width="2" height="1.7" fill="#9a9a9a"/><rect x="3" y="10" width="2" height="1.7" fill="#000"/><path d="M6.3 5 H9.8 M6.3 8 H9.8 M6.3 11 H9.8" stroke="#8a8a8a" stroke-width="1"/></svg>
<div class="t li" style="left:21.19999999999999px;top:230px;letter-spacing:-0.068px;">Configure image quality for RemoteFX Adaptive Graphics</div>
<svg class="a" style="left:4px;top:249px" width="14" height="15" viewBox="0 0 14 15"><path d="M0.5 0.5 H9 L12.5 4 V14.2 H0.5 Z" fill="#fff" stroke="#8e8e8e"/><path d="M9 0.5 V4 H12.5" fill="#f4f4f4" stroke="#b4b4b4"/><path d="M0.5 0.5 V14.2 H12.5" fill="none" stroke="#7c7c7c"/><rect x="3" y="4" width="2" height="1.7" fill="#000"/><rect x="3" y="7" width="2" height="1.7" fill="#9a9a9a"/><rect x="3" y="10" width="2" height="1.7" fill="#000"/><path d="M6.3 5 H9.8 M6.3 8 H9.8 M6.3 11 H9.8" stroke="#8a8a8a" stroke-width="1"/></svg>
<div class="t li" style="left:21.19999999999999px;top:249px;letter-spacing:-0.15px;">Enable RemoteFX encoding for RemoteFX clients designed for Windows Server 2008 R2 SP1</div>
<svg class="a" style="left:4px;top:268px" width="14" height="15" viewBox="0 0 14 15"><path d="M0.5 0.5 H9 L12.5 4 V14.2 H0.5 Z" fill="#fff" stroke="#8e8e8e"/><path d="M9 0.5 V4 H12.5" fill="#f4f4f4" stroke="#b4b4b4"/><path d="M0.5 0.5 V14.2 H12.5" fill="none" stroke="#7c7c7c"/><rect x="3" y="4" width="2" height="1.7" fill="#000"/><rect x="3" y="7" width="2" height="1.7" fill="#9a9a9a"/><rect x="3" y="10" width="2" height="1.7" fill="#000"/><path d="M6.3 5 H9.8 M6.3 8 H9.8 M6.3 11 H9.8" stroke="#8a8a8a" stroke-width="1"/></svg>
<div class="t li" style="left:21.19999999999999px;top:268px;letter-spacing:-0.162px;">Configure RemoteFX Adaptive Graphics</div>
</div>
<div class="scr" style="left:865px;top:123px;width:17px;height:307px;"></div>
<div class="thumb" style="left:865px;top:140px;width:15px;height:224px;"></div>
<svg class="a" style="left:0;top:0" width="899" height="508"><path d="M869.1 134.05 L872.5 129.95 L875.9 134.05" fill="none" stroke="#5a5a5a" stroke-width="2.1"/></svg>
<svg class="a" style="left:0;top:0" width="899" height="508"><path d="M869.1 418.95 L872.5 423.05 L875.9 418.95" fill="none" stroke="#5a5a5a" stroke-width="2.1"/></svg>
<div class="scr" style="left:448px;top:429.6px;width:434px;height:16.4px;"></div>
<div class="a" style="left:236px;top:446px;width:647px;height:2px;background:#f0f0f0;"></div>
<div class="thumb" style="left:465.4px;top:430.6px;width:211px;height:14.2px;"></div>
<svg class="a" style="left:0;top:0" width="899" height="508"><path d="M458.55 434.1 L454.45 437.5 L458.55 440.9" fill="none" stroke="#5a5a5a" stroke-width="2.1"/></svg>
<svg class="a" style="left:0;top:0" width="899" height="508"><path d="M853.95 434.1 L858.05 437.5 L853.95 440.9" fill="none" stroke="#5a5a5a" stroke-width="2.1"/></svg>
<svg class="a" style="left:232px;top:445px" width="140" height="24" viewBox="0 0 140 24"><path d="M2.5 0 L10.5 21 H67 L73.5 3.5 V0Z" fill="#fff"/><path d="M4 2.5 H73" stroke="#e0e0e0" stroke-width="1"/><path d="M2.5 1 L10.5 21 H67 L73.5 3.5" fill="none" stroke="#5a5a5a" stroke-width="1"/><path d="M75 21 L70.3 8 L73.5 3.5 H135 L128.5 21 Z" fill="#f0f0f0" stroke="#5a5a5a" stroke-width="1"/></svg>
<div class="t" style="left:246.5px;top:450px;transform:scaleX(0.9168);transform-origin:0 0;">Extended</div>
<div class="t" style="left:310px;top:450px;letter-spacing:-0.343px;">Standard</div>
<div class="t" style="left:13px;top:473px;letter-spacing:0.239px;">16 setting(s)</div>
<div class="a" style="left:662px;top:469px;width:1px;height:21px;background:#d7d7d7;"></div>
<div class="a" style="left:795px;top:469px;width:1px;height:21px;background:#d7d7d7;"></div>
<div class="a" style="left:880px;top:469px;width:1px;height:21px;background:#d7d7d7;"></div>
<div class="a" id="frame"></div>
</body>
</html>
